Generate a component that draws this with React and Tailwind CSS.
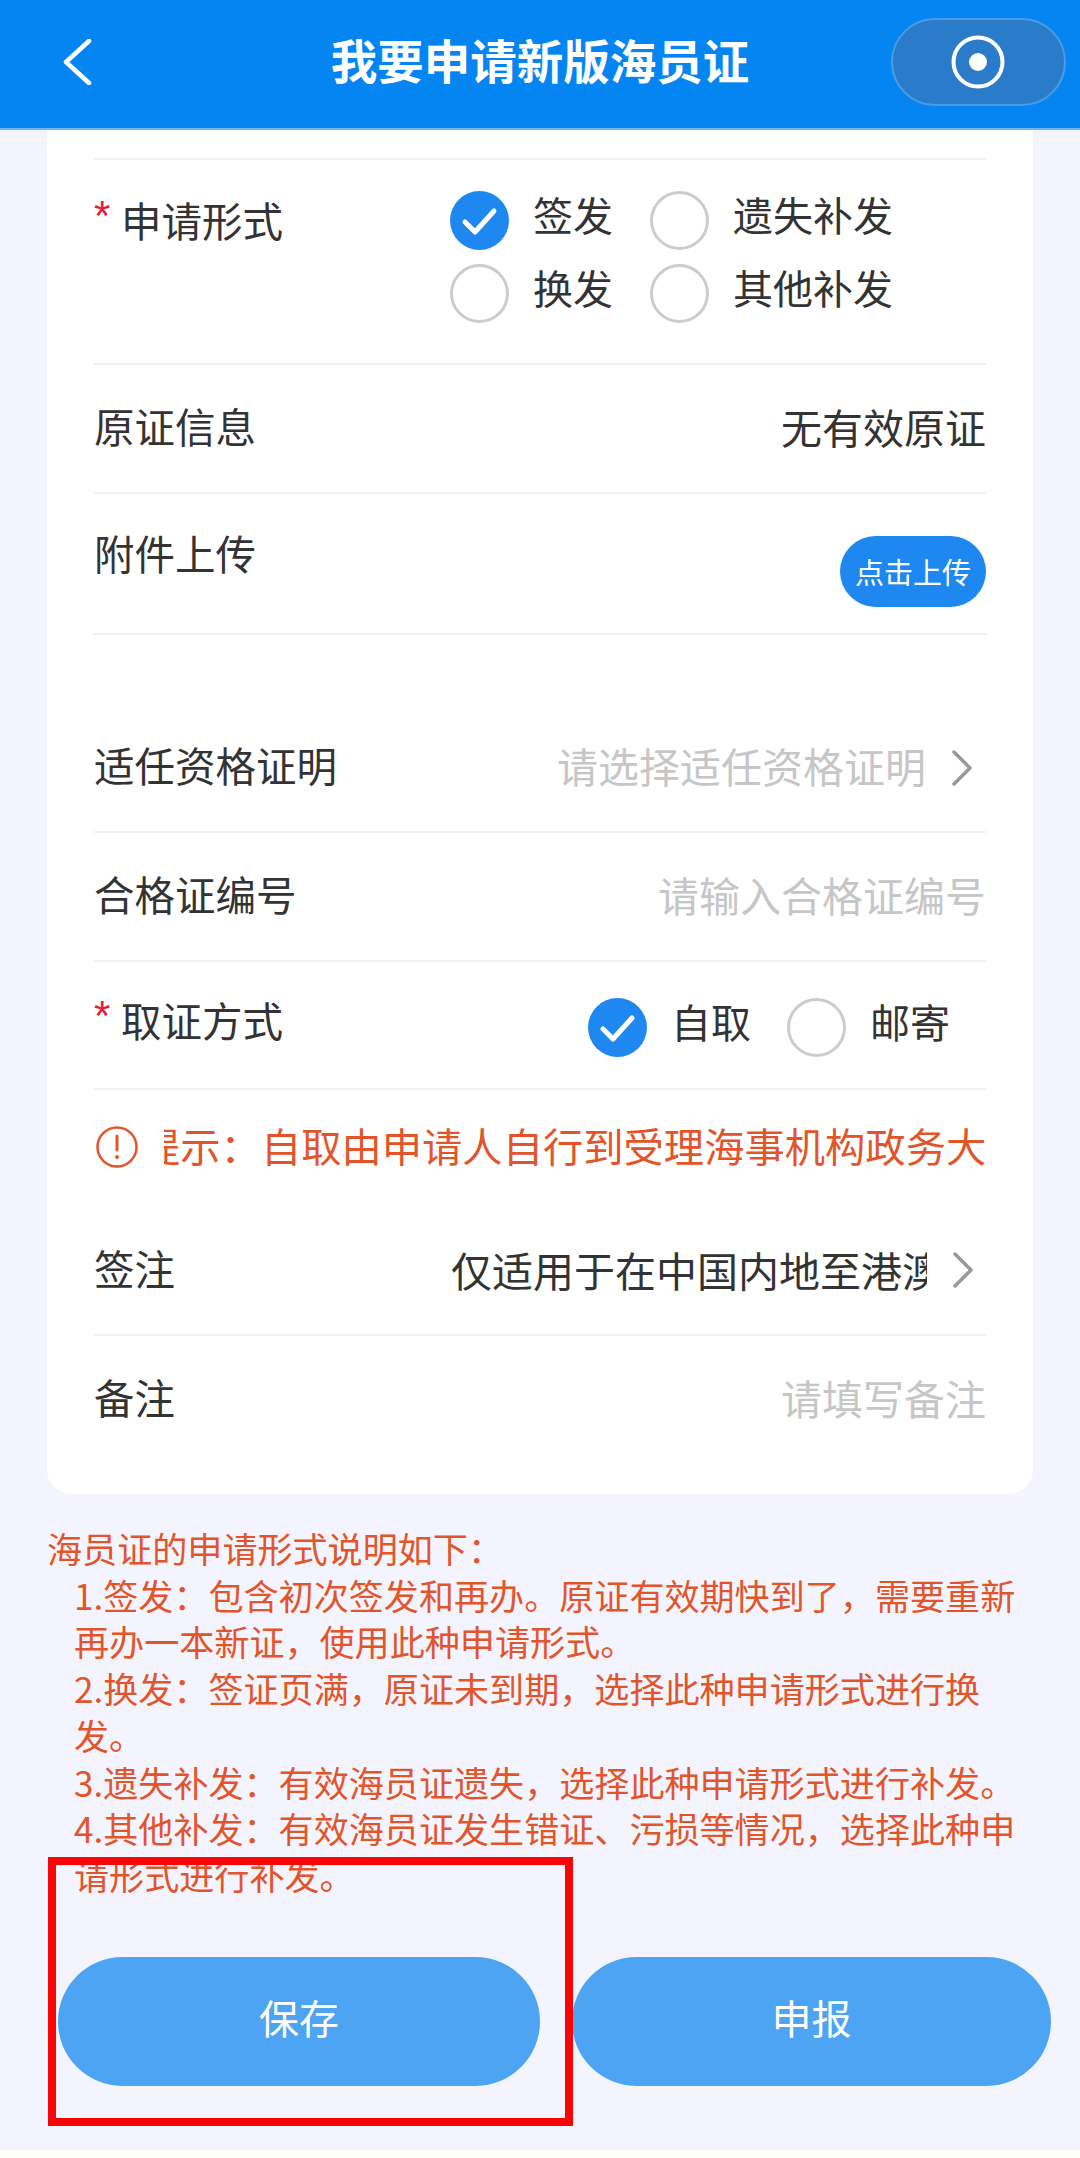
import React from "react"

const FONT = "font-['Noto_Sans_CJK_SC','Noto_Sans',sans-serif]"

const Chevron = () => (
  <svg width="22" height="36" viewBox="0 0 22 36" fill="none" className="shrink-0">
    <path d="M3 2l16 16L3 34" stroke="#999999" strokeWidth="3.5" strokeLinecap="round" strokeLinejoin="round" />
  </svg>
)

const Radio = ({ label, checked = false }) => (
  <div className="flex items-center">
    {checked ? (
      <svg width="59" height="59" viewBox="0 0 59 59" className="shrink-0">
        <circle cx="29.5" cy="29.5" r="29.5" fill="#1e88f0" />
        <path d="M15 31l10 10 19-21" fill="none" stroke="#fff" strokeWidth="5" strokeLinecap="round" strokeLinejoin="round" />
      </svg>
    ) : (
      <div className="w-[59px] h-[59px] rounded-full border-[3px] border-[#cccccc] bg-white shrink-0" />
    )}
    <span className="ml-6 text-[40px] leading-[59px] text-[#333333] -translate-y-[6px]">{label}</span>
  </div>
)

const Label = ({ required, children }) => (
  <div className="flex items-center self-start text-[40.5px] leading-[60px] text-[#333333] -translate-y-[3px]">
    {required && (
      <span className="w-[27px] text-[42px] leading-[60px] font-['Liberation_Sans',sans-serif] text-[#e0203a] -translate-y-[4px]">*</span>
    )}
    {children}
  </div>
)

const Value = ({ muted, children }) => (
  <span className={`text-[41px] leading-[60px] -translate-y-[3px] ${muted ? "text-[#c6c6c6]" : "text-[#333333]"}`}>
    {children}
  </span>
)

const Row = ({ children, className = "" }) => (
  <div className={`flex justify-between border-b-2 border-[#f1f1f1] ${className}`}>{children}</div>
)

const Notes = () => (
  <div className="mt-[31px] mx-[47px] text-[35.1px] leading-[46.7px] text-[#e2552b]">
    <p>海员证的申请形式说明如下：</p>
    <div className="pl-[27px]">
      <p>1.签发：包含初次签发和再办。原证有效期快到了，需要重新再办一本新证，使用此种申请形式。</p>
      <p>2.换发：签证页满，原证未到期，选择此种申请形式进行换发。</p>
      <p>3.遗失补发：有效海员证遗失，选择此种申请形式进行补发。</p>
      <p>4.其他补发：有效海员证发生错证、污损等情况，选择此种申请形式进行补发。</p>
    </div>
  </div>
)

export default function App() {
  return (
    <div className={`relative w-[1080px] h-[2158px] overflow-hidden bg-[#f3f4fe] ${FONT}`}>
      {/* Title bar */}
      <header className="relative h-[130px] bg-[#0585f2] border-b-2 border-[#6ab6f0] flex items-center justify-center">
        <svg width="30" height="46" viewBox="0 0 30 46" fill="none" className="absolute left-[62px] top-[39px]">
          <path d="M27 2L4 23l23 21" stroke="#fff" strokeWidth="4.5" strokeLinecap="round" strokeLinejoin="round" />
        </svg>
        <h1 className="text-[46.5px] leading-[60px] font-bold text-white -translate-y-[5px]">我要申请新版海员证</h1>
        <div className="absolute left-[891px] top-[18px] w-[175px] h-[88px] rounded-full bg-[#2a7ccb] border-2 border-[#4b9be6] flex items-center justify-center">
          <svg width="54" height="54" viewBox="0 0 54 54" className="ml-[-2px]">
            <circle cx="27" cy="27" r="24.5" fill="none" stroke="#fff" strokeWidth="4" />
            <circle cx="27" cy="27" r="9" fill="#fff" />
          </svg>
        </div>
      </header>

      {/* Form card */}
      <section className="mx-[47px] h-[1364px] bg-white rounded-b-[24px] px-[47px] pt-[28px]">
        <div className="border-b-2 border-[#f1f1f1]" />

        <Row className="h-[205px] pt-[31px]">
          <div className="pt-[2px]"><Label required>申请形式</Label></div>
          <div className="mr-[93px] grid grid-cols-[200px_auto] gap-y-[14px] self-start">
            <Radio label="签发" checked />
            <Radio label="遗失补发" />
            <Radio label="换发" />
            <Radio label="其他补发" />
          </div>
        </Row>

        <Row className="h-[129px] items-center">
          <div className="self-center"><Label>原证信息</Label></div>
          <Value>无有效原证</Value>
        </Row>

        <Row className="h-[141px] pt-[32px] mb-[69px]">
          <Label>附件上传</Label>
          <button className="mt-[10px] w-[146px] h-[71px] rounded-full bg-[#1e88f0] text-white text-[29px] leading-[65px] self-start">
            点击上传
          </button>
        </Row>

        <Row className="h-[129px] items-center">
          <div className="self-center"><Label>适任资格证明</Label></div>
          <div className="flex items-center">
            <Value muted>请选择适任资格证明</Value>
            <div className="ml-[25px] mr-[13px]"><Chevron /></div>
          </div>
        </Row>

        <Row className="h-[129px] items-center">
          <div className="self-center"><Label>合格证编号</Label></div>
          <Value muted>请输入合格证编号</Value>
        </Row>

        <Row className="h-[128px] pt-[31px]">
          <Label required>取证方式</Label>
          <div className="flex mt-[5px] mr-[36px] gap-[36px] self-start">
            <Radio label="自取" checked />
            <Radio label="邮寄" />
          </div>
        </Row>

        {/* Scrolling notice, caught mid-scroll */}
        <div className="h-[116px] flex items-center pb-[3px]">
          <svg width="42" height="42" viewBox="0 0 42 42" fill="none" className="shrink-0 ml-[2px]">
            <circle cx="21" cy="21" r="19.5" stroke="#e2552b" strokeWidth="2.5" />
            <path d="M21 10v14" stroke="#e2552b" strokeWidth="3" strokeLinecap="round" />
            <circle cx="21" cy="31" r="2" fill="#e2552b" />
          </svg>
          <div className="ml-[26px] flex-1 overflow-hidden">
            <p className="ml-[-24px] whitespace-nowrap text-[40.3px] leading-[60px] text-[#e2552b] -translate-y-[2px]">
              提示：自取由申请人自行到受理海事机构政务大厅领取证书
            </p>
          </div>
        </div>

        <Row className="h-[130px] items-center">
          <div className="self-center translate-y-[1px]"><Label>签注</Label></div>
          <div className="flex items-center">
            <div className="w-[476px] overflow-hidden">
              <p className="whitespace-nowrap text-[41px] leading-[60px] text-[#333333] -translate-y-[1px]">仅适用于在中国内地至港澳地区通行</p>
            </div>
            <div className="ml-[25px] mr-[12px]"><Chevron /></div>
          </div>
        </Row>

        <div className="h-[128px] flex items-center justify-between">
          <div className="self-center"><Label>备注</Label></div>
          <Value muted>请填写备注</Value>
        </div>
      </section>

      <Notes />

      {/* Bottom actions */}
      <div className="absolute left-[58px] top-[1957px] flex gap-[32px]">
        <button className="w-[482px] h-[129px] rounded-full bg-[#4da4f3] text-white text-[40px]">
          <span className="block -translate-y-[5px]">保存</span>
        </button>
        <button className="w-[479px] h-[129px] rounded-full bg-[#4da4f3] text-white text-[40px]">
          <span className="block -translate-y-[5px]">申报</span>
        </button>
      </div>

      {/* Red annotation box */}
      <div className="absolute left-[48px] top-[1857px] w-[525px] h-[269px] border-[8px] border-[#fa0505]" />

      {/* Strip at the very bottom of the screen */}
      <div className="absolute left-0 right-0 bottom-0 h-[8px] bg-[#fefefb]" />
    </div>
  )
}
